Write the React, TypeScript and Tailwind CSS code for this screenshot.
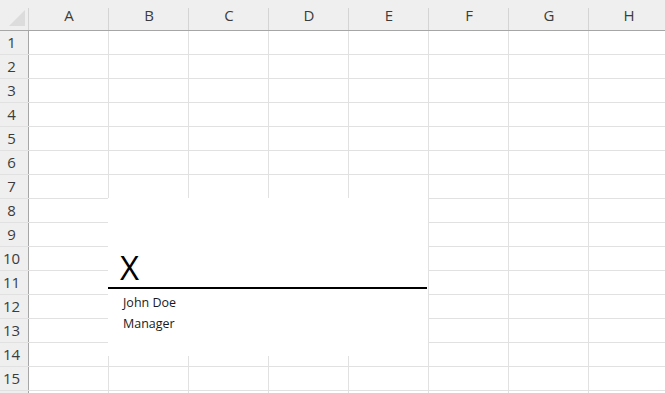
const columns = ["A", "B", "C", "D", "E", "F", "G", "H"];
const rows = Array.from({ length: 16 }, (_, i) => i + 1);

function CornerTriangle() {
  return (
    <svg width="29" height="31" viewBox="0 0 29 31" className="block">
      <polygon points="9,26 25,10 25,26" fill="#dcdcdc" />
    </svg>
  );
}

function SignatureLine() {
  return (
    <div className="absolute left-[108px] top-[198px] w-[320px] h-[158px] bg-white">
      <div className="h-[89px] flex items-end pl-[12px]">
        <span className="text-[33px] leading-none text-black pb-[3px]">X</span>
      </div>
      <div className="h-[2px] w-[319px] bg-black" />
      <div className="pl-[15px] pt-[3px] text-[12.5px] leading-[21px] text-[#1a1a1a]">
        <div>John Doe</div>
        <div>Manager</div>
      </div>
    </div>
  );
}

export default function App() {
  return (
    <div
      className="relative w-[665px] h-[393px] overflow-hidden bg-white"
      style={{ fontFamily: '"Open Sans", "Noto Sans", sans-serif' }}
    >
      {/* column header */}
      <div className="flex h-[31px] bg-[#efefef] border-b border-[#a6a6a6]">
        <div className="w-[29px] shrink-0 relative">
          <CornerTriangle />
          <div className="absolute right-0 top-[8px] bottom-0 w-px bg-[#d4d4d4]" />
        </div>
        {columns.map((c) => (
          <div
            key={c}
            className="w-[80px] shrink-0 relative flex items-center justify-center text-[15px] text-[#3c3c3c] pt-[1px]"
          >
            {c}
            <div className="absolute right-0 top-[8px] bottom-0 w-px bg-[#d4d4d4]" />
          </div>
        ))}
      </div>

      {/* rows */}
      {rows.map((r) => (
        <div key={r} className="flex h-[24px] border-b border-[#e1e1e1]">
          <div className="w-[29px] shrink-0 bg-[#efefef] border-r border-[#a6a6a6] flex items-center justify-center pr-[5px] text-[15px] text-[#3c3c3c]">
            {r < 16 ? r : ""}
          </div>
          {columns.map((c) => (
            <div key={c} className="w-[80px] shrink-0 border-r border-[#e1e1e1]" />
          ))}
        </div>
      ))}

      <SignatureLine />
    </div>
  );
}
